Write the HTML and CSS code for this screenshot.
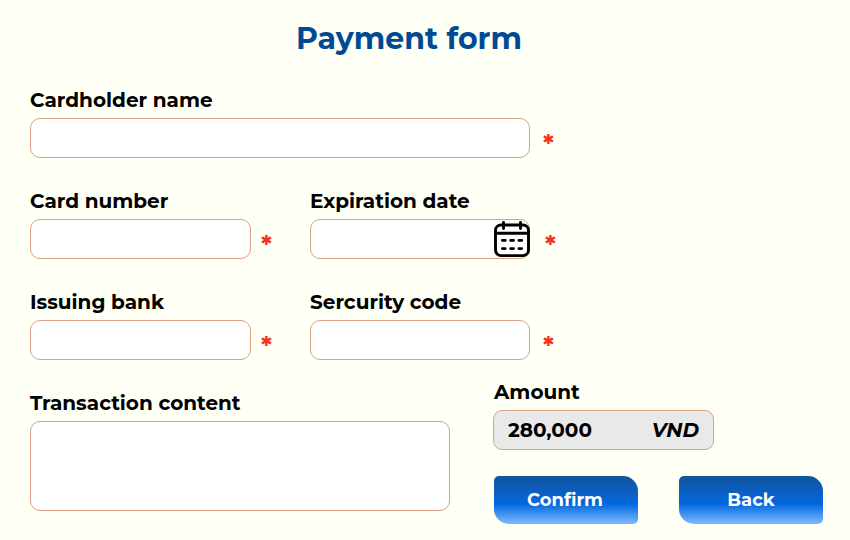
FILE: index.html
```html
<!DOCTYPE html>
<html lang="en">
<head>
<meta charset="utf-8">
<title>Payment form</title>
<link rel="stylesheet" href="styles.css">
</head>
<body>
<form class="form">
  <h1 class="title">Payment form</h1>
  <div class="field name">
    <label class="label" for="name">Cardholder name</label>
    <div class="row"><input class="input" id="name"><span class="star">*</span></div>
  </div>
  <div class="grid">
    <div class="field"><label class="label" for="number">Card number</label>
      <div class="row"><input class="input" id="number"><span class="star near">*</span></div></div>
    <div class="field"><label class="label" for="date">Expiration date</label>
      <div class="row date"><input class="input narrow" id="date">
        <svg class="calendar" viewBox="0 0 38 38" fill="none" stroke="#000" stroke-width="2.9" stroke-linecap="round" stroke-linejoin="round">
          <rect x="2.5" y="5" width="33" height="30.6" rx="5.5"/>
          <path d="M2.5 13.3h33M10.5 2.5v6M27.5 2.5v6"/>
          <path stroke-width="2.6" d="M9.3 20.4h3M17.6 20.4h3M25.8 20.4h3M9.3 28.6h3M17.6 28.6h3M25.8 28.6h3"/>
        </svg><span class="star wide">*</span></div></div>
    <div class="field"><label class="label" for="bank">Issuing bank</label>
      <div class="row"><input class="input" id="bank"><span class="star near">*</span></div></div>
    <div class="field"><label class="label" for="code">Sercurity code</label>
      <div class="row"><input class="input narrow" id="code"><span class="star">*</span></div></div>
  </div>
  <div class="bottom">
    <div class="content"><label class="label" for="content">Transaction content</label>
      <textarea class="input area" id="content"></textarea></div>
    <div class="side">
      <div class="label inset">Amount</div>
      <div class="amount"><span>280,000</span><span class="currency">VND</span></div>
      <div class="actions"><button class="button confirm" type="button">Confirm</button><button class="button" type="button">Back</button></div>
    </div>
  </div>
</form>
</body>
</html>
```
FILE: styles.css
```css
* { box-sizing: border-box; }
body { margin: 0; background: #fefff5; color: #000; font-family: Montserrat, "Open Sans", sans-serif; }
.form { width: 850px; height: 540px; padding: 18px 0 0 30px; overflow: hidden; }
.title { margin: 0; width: 758px; height: 40px; line-height: 41px; text-align: center; color: #004a94; font-size: 30px; font-weight: 700; }
.name { margin-top: 29px; }
.label { display: block; width: max-content; height: 31px; line-height: 26px; font-size: 20px; font-weight: 700; white-space: nowrap; }
.inset { padding-left: 1px; }
.row { display: flex; height: 40px; }
.input { display: block; width: 221px; height: 40px; border: 1px solid #dba285; border-radius: 10px; background: #fff; padding: 0 14px; outline: 0; }
.narrow { width: 220px; }
.name .input { width: 500px; }
.star { margin-left: 13px; line-height: 52px; font-size: 25px; font-weight: 700; color: #f5321a; }
.near { margin-left: 10px; }
.wide { margin-left: 15px; }
.grid { display: grid; grid-template-columns: 280px 280px; row-gap: 30px; margin-top: 30px; }
.date { position: relative; }
.calendar { position: absolute; left: 183px; top: 1px; width: 38px; height: 38px; }
.bottom { display: flex; margin-top: 30px; }
.content { width: 463px; }
.area { width: 420px; height: 90px; resize: none; }
.side { margin-top: -11px; }
.amount { width: 221px; height: 40px; border: 1px solid #dba285; border-radius: 9px; background: #e9e9e9; padding: 0 14px; display: flex; justify-content: space-between; line-height: 38px; font-size: 20px; font-weight: 700; }
.currency { font-style: italic; }
.actions { display: flex; gap: 41px; margin: 26px 0 0 1px; }
.button { width: 144px; height: 48.4px; border: 0; padding: 0; border-radius: 5px 15px 5px 15px; background: linear-gradient(#14559c, #0267df 58%, #80baff); color: #fff; font: 700 18px Montserrat, "Open Sans", sans-serif; }
.confirm { padding-right: 2px; }
```
